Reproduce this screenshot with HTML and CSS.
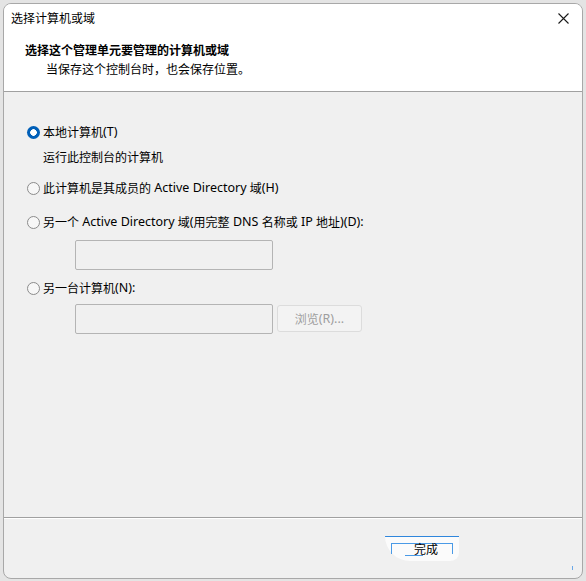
FILE: index.html
```html
<!doctype html>
<html lang="zh-CN">
<head>
    <meta charset="utf-8">
    <title>选择计算机或域</title>
    <link rel="stylesheet" href="styles.css">
</head>
<body>
    <div class="window">
        <div class="header">
            <div class="titlebar">
                <span class="title">选择计算机或域</span>
                <span class="close">
                    <svg width="11" height="11" viewBox="0 0 11 11"><path d="M0.5 0.5 L10.5 10.5 M10.5 0.5 L0.5 10.5" stroke="#1a1a1a" stroke-width="1.1"/></svg>
                </span>
            </div>
            <div class="heading">选择这个管理单元要管理的计算机或域</div>
            <div class="subheading">当保存这个控制台时，也会保存位置。</div>
        </div>

        <div class="content">
            <label class="option first"><span class="radio checked"></span>本地计算机<span class="en">(T)</span></label>
            <div class="note">运行此控制台的计算机</div>
            <label class="option second"><span class="radio"></span>此计算机是其成员的<span class="en">&nbsp;Active Directory&nbsp;</span>域<span class="en">(H)</span></label>
            <label class="option third"><span class="radio"></span>另一个<span class="en">&nbsp;Active Directory&nbsp;</span>域<span class="en">(</span>用完整<span class="en">&nbsp;DNS&nbsp;</span>名称或<span class="en">&nbsp;IP&nbsp;</span>地址<span class="en">)(D):</span></label>
            <div class="field-row one"><span class="field"></span></div>
            <label class="option fourth"><span class="radio"></span>另一台计算机<span class="en">(N):</span></label>
            <div class="field-row two">
                <span class="field"></span>
                <span class="browse">浏览<span class="en">(R)...</span></span>
            </div>
        </div>

        <div class="footer">
            <span class="finish"><span class="finish-text">完成</span></span>
            <span class="grip"></span>
        </div>
    </div>
</body>
</html>
```

FILE: styles.css
```css
body {
    margin: 0;
    background: #e4e4e4;
    font-family: "Noto Sans CJK SC", "Liberation Sans", sans-serif;
    font-size: 12px;
    color: #000;
}
.en {
    font-family: "Noto Sans", "Liberation Sans", sans-serif;
    font-size: 12.5px;
}
.window {
    margin: 3px 0 0 3px;
    width: 578px;
    height: 574px;
    border: 1px solid #a8a8a8;
    border-radius: 8px;
    background: #f0f0f0;
    overflow: hidden;
    display: flex;
    flex-direction: column;
}
.header {
    background: #fff;
    height: 87px;
    border-bottom: 1px solid #a0a0a0;
}
.titlebar {
    height: 28px;
    display: flex;
    align-items: center;
    justify-content: space-between;
    padding: 0 13px 0 7px;
}
.title {
    line-height: 16px;
}
.close {
    display: flex;
}
.heading {
    font-weight: bold;
    margin: 10px 0 0 21px;
    line-height: 16px;
}
.subheading {
    margin: 3px 0 0 42px;
    line-height: 16px;
}
.content {
    flex: 1;
    padding: 32px 0 0 23px;
}
.option {
    display: flex;
    align-items: center;
    height: 16px;
    line-height: 16px;
    white-space: pre;
}
.radio {
    width: 11px;
    height: 11px;
    border: 1px solid #8b8b8b;
    border-radius: 50%;
    background: #f7f7f7;
    margin-right: 3px;
    flex: none;
}
.radio.checked {
    width: 13px;
    height: 13px;
    border: none;
    background: radial-gradient(circle, #fff 0 3px, #005fb8 3.6px);
}
.note {
    height: 16px;
    line-height: 16px;
    margin: 9px 0 0 16px;
}
.option.second {
    margin-top: 15px;
}
.option.third {
    margin-top: 18px;
}
.field-row {
    display: flex;
    gap: 4px;
    margin-left: 48px;
}
.field-row.one {
    margin-top: 10px;
}
.field-row.two {
    margin-top: 8px;
}
.field {
    width: 196px;
    height: 28px;
    border: 1px solid #b4b4b4;
    border-radius: 2px;
    background: #f0f0f0;
}
.option.fourth {
    margin-top: 10px;
}
.browse {
    width: 83px;
    height: 25px;
    margin-top: 1px;
    border: 1px solid #dcdcdc;
    border-radius: 3px;
    background: #f3f3f3;
    color: #9e9e9e;
    display: flex;
    align-items: center;
    justify-content: center;
}
.footer {
    height: 60px;
    border-top: 1px solid #a0a0a0;
    box-shadow: inset 0 1px 0 #fff;
    position: relative;
}
/* finish button, drawn half-repainted */
.finish {
    position: absolute;
    left: 381px;
    top: 18px;
    width: 74px;
    height: 24px;
    background: #fbfbfb;
    border-top: 1px solid #2f86dc;
    border-radius: 0 0 10px 30px;
}
.finish::before {
    content: "";
    position: absolute;
    left: 6px;
    top: 6px;
    width: 60px;
    height: 10px;
    border-top: 1px solid #4a9ae6;
    border-left: 1px solid #4a9ae6;
    border-right: 1px solid #4a9ae6;
}
.finish::after {
    content: "";
    position: absolute;
    left: 20px;
    top: 18px;
    width: 18px;
    border-top: 1px solid #4a9ae6;
}
.finish-text {
    position: absolute;
    left: 29px;
    top: 4px;
    line-height: 16px;
}
.grip {
    position: absolute;
    right: 9px;
    bottom: 8px;
    width: 1px;
    height: 4px;
    background: #6aa8e8;
}
```
